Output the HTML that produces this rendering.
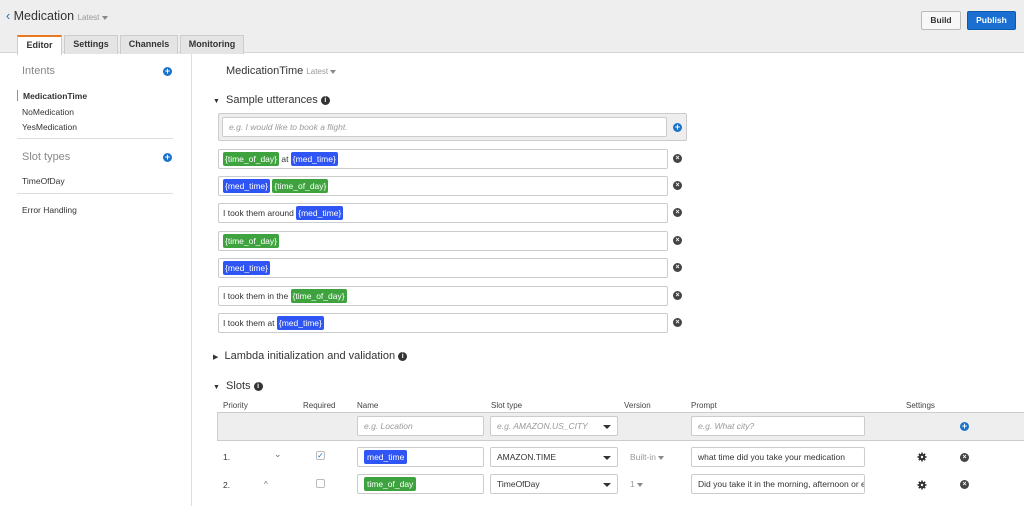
<!DOCTYPE html>
<html><head><style>
*{box-sizing:border-box;margin:0;padding:0}
body{width:1024px;height:506px;overflow:hidden;background:#fff;font-family:"Liberation Sans",Arial,sans-serif;color:#333;position:relative}
.a{position:absolute}
.hdr{left:0;top:0;width:1024px;height:53px;background:#eeeeee;border-bottom:1px solid #d5d5d5}
.tab{top:35px;height:19px;border:1px solid #ccc;border-bottom:none;background:#e4e4e4;font-size:9px;font-weight:bold;text-align:center;line-height:17px;color:#333}
.side{left:0;top:54px;width:192px;height:452px;border-right:1px solid #ddd}
.si{font-size:8.5px;color:#333}
.sh{font-size:11px;color:#888}
.plus{width:9px;height:9px;border-radius:50%;background:#1a73c8;color:#fff;font-size:9px;line-height:9px;text-align:center;font-weight:bold}
.ub{left:218px;width:450px;height:20px;border:1px solid #ccc;border-radius:2px;font-size:8.5px;padding:2px 4px;line-height:14px;white-space:nowrap}
.g,.b{display:inline-block;color:#fff;border-radius:2px;padding:0 2px;line-height:14px;font-size:8.5px}
.g{background:#3ea33e}.b{background:#2f55f5}
.x{left:673px;width:9px;height:9px;border-radius:50%;background:#444;color:#fff;font-size:7px;line-height:9px;text-align:center;font-weight:bold}
.inp{height:20px;border:1px solid #ccc;border-radius:2px;background:#fff;font-size:8.5px;padding:0 6px;line-height:18px;white-space:nowrap;overflow:hidden}
.ph{color:#999;font-style:italic}
.caret{display:inline-block;width:0;height:0;border-left:3px solid transparent;border-right:3px solid transparent;border-top:4px solid #888;vertical-align:middle}
.sel .caret{position:absolute;right:6px;top:8px;border-top-color:#333;border-left-width:4px;border-right-width:4px}
.lbl{font-size:8px;color:#444;top:401px}
.info{display:inline-block;width:9px;height:9px;border-radius:50%;background:#333;color:#fff;font-size:7px;line-height:9px;text-align:center;font-weight:bold;vertical-align:1px}
</style></head><body>
<div class="a hdr"></div>
<div class="a" style="left:6px;top:9px;font-size:12.5px;color:#333"><span style="color:#1a73c8">&lsaquo;</span> Medication <span style="font-size:8px;color:#999">Latest <span class="caret"></span></span></div>
<div class="a" style="left:921px;top:11px;width:40px;height:19px;border:1px solid #bbb;border-radius:2px;background:#f7f7f7;font-size:8.5px;font-weight:bold;text-align:center;line-height:17px">Build</div>
<div class="a" style="left:967px;top:11px;width:49px;height:19px;border:1px solid #0a5ab0;border-radius:2px;background:#1a6fd0;color:#fff;font-size:8.5px;font-weight:bold;text-align:center;line-height:17px">Publish</div>
<div class="a tab" style="left:17px;width:45px;background:#fff;border-top:2px solid #e8791e;height:20px">Editor</div>
<div class="a tab" style="left:64px;width:54px">Settings</div>
<div class="a tab" style="left:120px;width:58px">Channels</div>
<div class="a tab" style="left:180px;width:64px">Monitoring</div>

<div class="a side"></div>
<div class="a sh" style="left:22px;top:65px">Intents</div>
<div class="a plus" style="left:163px;top:67px">+</div>
<div class="a" style="left:17px;top:90px;width:1px;height:11px;background:#e8791e"></div>
<div class="a si" style="left:23px;top:91px;font-weight:bold">MedicationTime</div>
<div class="a si" style="left:22px;top:107px">NoMedication</div>
<div class="a si" style="left:22px;top:122px">YesMedication</div>
<div class="a" style="left:17px;top:138px;width:156px;height:1px;background:#ddd"></div>
<div class="a sh" style="left:22px;top:151px">Slot types</div>
<div class="a plus" style="left:163px;top:153px">+</div>
<div class="a si" style="left:22px;top:176px">TimeOfDay</div>
<div class="a" style="left:17px;top:193px;width:156px;height:1px;background:#ddd"></div>
<div class="a si" style="left:22px;top:205px">Error Handling</div>

<div class="a" style="left:226px;top:65px;font-size:11px;color:#333">MedicationTime <span style="font-size:8px;color:#999">Latest <span class="caret"></span></span></div>
<div class="a" style="left:213px;top:94px;font-size:11px;color:#333"><span style="font-size:7px">&#9660;</span>&nbsp; Sample utterances <span class="info">i</span></div>
<div class="a" style="left:218px;top:113px;width:469px;height:28px;background:#eee;border:1px solid #ccc;border-radius:2px"></div>
<div class="a inp ph" style="left:222px;top:117px;width:445px">e.g. I would like to book a flight.</div>
<div class="a plus" style="left:673px;top:123px">+</div>

<div class="a ub" style="top:149px"><span class="g">{time_of_day}</span> at <span class="b">{med_time}</span></div><div class="a x" style="top:154px">×</div>
<div class="a ub" style="top:176px"><span class="b">{med_time}</span> <span class="g">{time_of_day}</span></div><div class="a x" style="top:181px">×</div>
<div class="a ub" style="top:203px">I took them around <span class="b">{med_time}</span></div><div class="a x" style="top:208px">×</div>
<div class="a ub" style="top:231px"><span class="g">{time_of_day}</span></div><div class="a x" style="top:236px">×</div>
<div class="a ub" style="top:258px"><span class="b">{med_time}</span></div><div class="a x" style="top:263px">×</div>
<div class="a ub" style="top:286px">I took them in the <span class="g">{time_of_day}</span></div><div class="a x" style="top:291px">×</div>
<div class="a ub" style="top:313px">I took them at <span class="b">{med_time}</span></div><div class="a x" style="top:318px">×</div>

<div class="a" style="left:213px;top:350px;font-size:11px"><span style="font-size:7px">&#9654;</span>&nbsp; Lambda initialization and validation <span class="info">i</span></div>
<div class="a" style="left:213px;top:380px;font-size:11px"><span style="font-size:7px">&#9660;</span>&nbsp; Slots <span class="info">i</span></div>

<div class="a lbl" style="left:223px">Priority</div>
<div class="a lbl" style="left:303px">Required</div>
<div class="a lbl" style="left:357px">Name</div>
<div class="a lbl" style="left:491px">Slot type</div>
<div class="a lbl" style="left:624px">Version</div>
<div class="a lbl" style="left:691px">Prompt</div>
<div class="a lbl" style="left:906px">Settings</div>

<div class="a" style="left:217px;top:412px;width:807px;height:29px;background:#eee;border:1px solid #ccc;border-right:none"></div>
<div class="a inp ph" style="left:357px;top:416px;width:127px">e.g. Location</div>
<div class="a inp ph sel" style="left:490px;top:416px;width:128px">e.g. AMAZON.US_CITY<span class="caret"></span></div>
<div class="a inp ph" style="left:691px;top:416px;width:174px">e.g. What city?</div>
<div class="a plus" style="left:960px;top:422px">+</div>

<div class="a" style="left:223px;top:452px;font-size:8.5px">1.</div>
<div class="a" style="left:274px;top:449px;font-size:9px;color:#666">&#8964;</div>
<div class="a" style="left:316px;top:451px;width:9px;height:9px;border:1px solid #bbb;border-radius:2px;font-size:8px;line-height:8px;color:#1a73c8;text-align:center">✓</div>
<div class="a inp" style="left:357px;top:447px;width:127px;padding:0 6px"><span class="b" style="margin-top:2px;padding:0 3px">med_time</span></div>
<div class="a inp sel" style="left:490px;top:447px;width:128px">AMAZON.TIME<span class="caret"></span></div>
<div class="a" style="left:630px;top:452px;font-size:8.5px;color:#999">Built-in <span class="caret"></span></div>
<div class="a inp" style="left:691px;top:447px;width:174px">what time did you take your medication</div>
<svg class="a" style="left:917px;top:452px" width="10" height="10" viewBox="0 0 10 10"><circle cx="5" cy="5" r="3.3" fill="#333"/><g stroke="#333" stroke-width="1.6"><line x1="5" y1="0.5" x2="5" y2="9.5"/><line x1="0.5" y1="5" x2="9.5" y2="5"/><line x1="1.8" y1="1.8" x2="8.2" y2="8.2"/><line x1="8.2" y1="1.8" x2="1.8" y2="8.2"/></g><circle cx="5" cy="5" r="1.2" fill="#fff"/></svg>
<div class="a x" style="left:960px;top:453px">×</div>

<div class="a" style="left:223px;top:480px;font-size:8.5px">2.</div>
<div class="a" style="left:264px;top:480px;font-size:8px;color:#666">^</div>
<div class="a" style="left:316px;top:479px;width:9px;height:9px;border:1px solid #bbb;border-radius:2px"></div>
<div class="a inp" style="left:357px;top:474px;width:127px;padding:0 6px"><span class="g" style="margin-top:2px;padding:0 3px">time_of_day</span></div>
<div class="a inp sel" style="left:490px;top:474px;width:128px">TimeOfDay<span class="caret"></span></div>
<div class="a" style="left:630px;top:479px;font-size:8.5px;color:#999">1 <span class="caret"></span></div>
<div class="a inp" style="left:691px;top:474px;width:174px">Did you take it in the morning, afternoon or evening</div>
<svg class="a" style="left:917px;top:480px" width="10" height="10" viewBox="0 0 10 10"><circle cx="5" cy="5" r="3.3" fill="#333"/><g stroke="#333" stroke-width="1.6"><line x1="5" y1="0.5" x2="5" y2="9.5"/><line x1="0.5" y1="5" x2="9.5" y2="5"/><line x1="1.8" y1="1.8" x2="8.2" y2="8.2"/><line x1="8.2" y1="1.8" x2="1.8" y2="8.2"/></g><circle cx="5" cy="5" r="1.2" fill="#fff"/></svg>
<div class="a x" style="left:960px;top:480px">×</div>
</body></html>
